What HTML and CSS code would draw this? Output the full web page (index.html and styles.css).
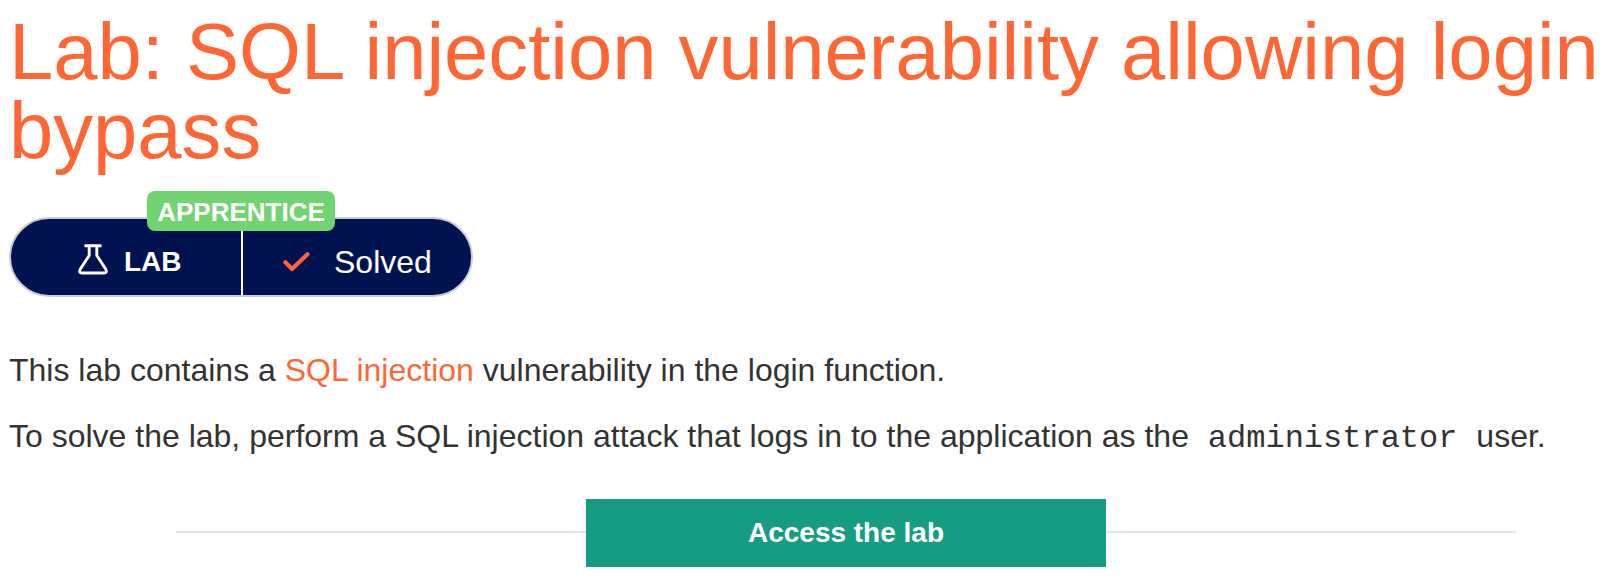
FILE: index.html
```html
<!DOCTYPE html>
<html lang="en">
<head>
<meta charset="utf-8">
<title>Lab: SQL injection vulnerability allowing login bypass</title>
<link rel="stylesheet" href="styles.css">
</head>
<body>
<main class="page">
  <h1 class="title">Lab: SQL injection vulnerability allowing login<br>bypass</h1>
  <div class="status">
    <span class="level">APPRENTICE</span>
    <div class="kind">
      <svg class="flask" width="30" height="31" viewBox="0 0 30 31" fill="none" stroke="#fff" stroke-width="2.9" stroke-linejoin="round"><path d="M6.5 1.8H23.5M11.2 2V11.5L2.2 25.2Q.6 29 4 29H26Q29.4 29 27.8 25.2L18.8 11.5V2"/></svg>
      <span class="kind-text">LAB</span>
    </div>
    <div class="state">
      <svg class="check" width="27" height="20" viewBox="0 0 27 20" fill="none" stroke="#ff6633" stroke-width="4.2" stroke-linecap="round" stroke-linejoin="round"><path d="M2.4 10.2L9 17L24.4 2.3"/></svg>
      <span class="state-text">Solved</span>
    </div>
  </div>
  <p class="text">This lab contains a <a class="link">SQL injection</a> vulnerability in the login function.</p>
  <p class="text">To solve the lab, perform a SQL injection attack that logs in to the application as the <code class="code">administrator</code> user.</p>
  <div class="launch"><a class="button">Access the lab</a></div>
</main>
</body>
</html>
```
FILE: styles.css
```css
body {
  margin: 0;
  background: #fff;
  color: #333332;
  font-family: "Liberation Sans", Arial, sans-serif;
}
.page {
  padding: 12px 0 0 9px;
}
.title {
  margin: 0;
  color: #ff6633;
  font-size: 79.6px;
  font-weight: 400;
  line-height: 79px;
  white-space: nowrap;
}
.status {
  position: relative;
  display: flex;
  box-sizing: border-box;
  width: 464px;
  height: 80px;
  margin: 47px 0 40px;
  border: 2px solid #c8cfd3;
  border-radius: 40px;
  background: #00124f;
  color: #fff;
}
.level {
  position: absolute;
  top: -28px;
  left: 136px;
  width: 188px;
  height: 40px;
  border-radius: 8px;
  background: #72d470;
  font-size: 26px;
  font-weight: 700;
  line-height: 42px;
  text-align: center;
}
.kind {
  display: flex;
  align-items: center;
  box-sizing: border-box;
  width: 232px;
  padding: 10px 0 0 67px;
  border-right: 2px solid #fff;
}
.flask {
  margin-top: -5px;
}
.kind-text {
  margin-left: 16px;
  font-size: 28px;
  font-weight: 700;
}
.state {
  display: flex;
  align-items: center;
  padding: 11px 0 0 40px;
}
.check {
  margin-top: -2px;
}
.state-text {
  margin-left: 24px;
  font-size: 32px;
}
.text {
  margin: 0;
  font-size: 32px;
  line-height: 66px;
  white-space: nowrap;
}
.link {
  color: #ff6633;
}
.code {
  padding: 0 10px;
  font-family: "Liberation Mono", "Courier New", monospace;
  font-size: 32px;
  line-height: 1;
}
.launch {
  display: flex;
  align-items: center;
  width: 1340px;
  margin: 30px 0 0 167px;
}
.launch::before,
.launch::after {
  content: "";
  flex: 1;
  height: 2px;
  margin-bottom: 2px;
  background: #e6e6e6;
}
.button {
  width: 520px;
  height: 68px;
  background: #169d81;
  color: #fff;
  font-size: 28px;
  font-weight: 700;
  line-height: 68px;
  text-align: center;
}
```
